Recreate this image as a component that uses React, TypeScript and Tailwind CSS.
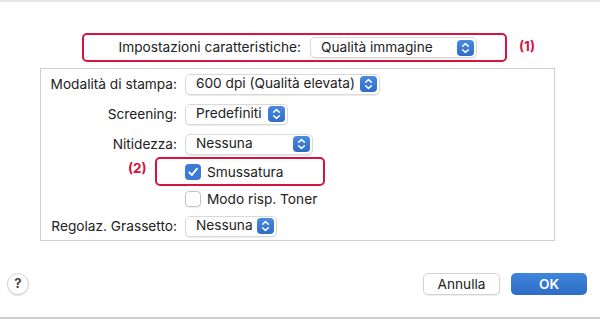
import React from 'react';

// Blue macOS-style up/down stepper glyph used on popup buttons
function Stepper() {
  return (
    <svg width="17" height="16" viewBox="0 0 17 16" className="shrink-0">
      <defs>
        <linearGradient id="stp" x1="0" y1="0" x2="0" y2="1">
          <stop offset="0" stopColor="#4a8ae0" />
          <stop offset="1" stopColor="#2f6cc6" />
        </linearGradient>
      </defs>
      <rect x="0" y="0" width="17" height="16" rx="4" fill="url(#stp)" />
      <path d="M5.6 6.3 L8.5 3.6 L11.4 6.3" fill="none" stroke="#fff" strokeWidth="1.5" strokeLinecap="round" strokeLinejoin="round" />
      <path d="M5.6 9.7 L8.5 12.4 L11.4 9.7" fill="none" stroke="#fff" strokeWidth="1.5" strokeLinecap="round" strokeLinejoin="round" />
    </svg>
  );
}

function Popup({ value, width }: { value: string; width: string }) {
  return (
    <div
      className={`${width} h-[21px] flex items-center justify-between pl-[10px] pr-[2px] bg-white border border-[#d9d9d9] rounded-[5px] shadow-[0_1px_1px_rgba(0,0,0,0.08)]`}
    >
      <span className="text-[13.7px] text-[#222] leading-none whitespace-nowrap">{value}</span>
      <Stepper />
    </div>
  );
}

function Checkbox({ checked }: { checked: boolean }) {
  if (checked) {
    return (
      <div className="w-[16px] h-[16px] rounded-[4px] bg-[#3b7bd6] flex items-center justify-center">
        <svg width="12" height="12" viewBox="0 0 12 12">
          <path d="M2.3 6.4 L4.9 9 L9.8 2.8" fill="none" stroke="#fff" strokeWidth="1.9" strokeLinecap="round" strokeLinejoin="round" />
        </svg>
      </div>
    );
  }
  return <div className="w-[16px] h-[16px] rounded-[4px] bg-white border border-[#c4c4c4] shadow-[0_1px_1px_rgba(0,0,0,0.06)]" />;
}

function PopupRow({ label, value, width }: { label: string; value: string; width: string }) {
  return (
    <div className="h-[30px] flex items-center">
      <div className="w-[136px] text-right text-[13.7px] text-[#222] whitespace-nowrap">{label}</div>
      <div className="ml-[8px]">
        <Popup value={value} width={width} />
      </div>
    </div>
  );
}

export default function App() {
  return (
    <div
      className="w-[600px] h-[319px] bg-white flex flex-col overflow-hidden"
      style={{ fontFamily: 'Inter, "Liberation Sans", sans-serif' }}
    >
      {/* top hairline */}
      <div className="h-[2px] bg-[#e6e6e6]" />

      {/* Header row with annotation (1) */}
      <div className="mt-[31px] flex items-start">
        <div className="ml-[82px] w-[425px] h-[29px] border-[2.5px] border-[#d8133d] rounded-[5px] flex items-center">
          <div className="w-[217px] text-right text-[13.7px] text-[#222] whitespace-nowrap">Impostazioni caratteristiche:</div>
          <div className="ml-[9px]">
            <Popup value="Qualità immagine" width="w-[167px]" />
          </div>
        </div>
        <div className="ml-[12px] mt-[3px] text-[13.5px] font-bold text-[#d8133d]">(1)</div>
      </div>

      {/* Settings panel */}
      <div className="relative ml-[40px] mt-[6px] w-[515px] h-[173px] border border-[#cfcfcf]">
        <PopupRow label="Modalità di stampa:" value="600 dpi (Qualità elevata)" width="w-[195px]" />
        <PopupRow label="Screening:" value="Predefiniti" width="w-[103px]" />
        <PopupRow label="Nitidezza:" value="Nessuna" width="w-[128px]" />

        <div className="h-[26px] flex items-center pl-[144px] gap-[6px]">
          <Checkbox checked />
          <span className="text-[13.7px] text-[#222]">Smussatura</span>
        </div>
        <div className="h-[28px] flex items-center pl-[144px] gap-[6px]">
          <Checkbox checked={false} />
          <span className="text-[13.7px] text-[#222]">Modo risp. Toner</span>
        </div>
        <div className="h-[26px] flex items-center">
          <div className="w-[136px] text-right text-[13.7px] text-[#222] whitespace-nowrap">Regolaz. Grassetto:</div>
          <div className="ml-[8px]">
            <Popup value="Nessuna" width="w-[92px]" />
          </div>
        </div>

        {/* annotation (2) */}
        <div className="absolute left-[87px] top-[89px] text-[13.5px] font-bold text-[#d8133d]">(2)</div>
        <div className="absolute left-[114px] top-[88px] w-[170px] h-[29px] border-[2.5px] border-[#d8133d] rounded-[5px]" />
      </div>

      {/* Bottom buttons */}
      <div className="mt-[32px] flex items-center">
        <div className="ml-[7px] w-[22px] h-[22px] rounded-full bg-white border border-[#d4d4d4] shadow-[0_1px_1px_rgba(0,0,0,0.1)] flex items-center justify-center text-[13px] font-bold text-[#444]">
          ?
        </div>
        <div className="ml-[394px] w-[77px] h-[22px] rounded-[5px] bg-white border border-[#d4d4d4] shadow-[0_1px_1px_rgba(0,0,0,0.08)] flex items-center justify-center text-[13.7px] text-[#222]">
          Annulla
        </div>
        <div className="ml-[11px] w-[76px] h-[22px] rounded-[5px] bg-gradient-to-b from-[#3f86dc] to-[#2e6cc4] flex items-center justify-center text-[13.7px] font-semibold text-white">
          OK
        </div>
      </div>

      <div className="flex-1" />
      {/* bottom hairline */}
      <div className="h-[2px] bg-[#cfcfcf]" />
    </div>
  );
}
